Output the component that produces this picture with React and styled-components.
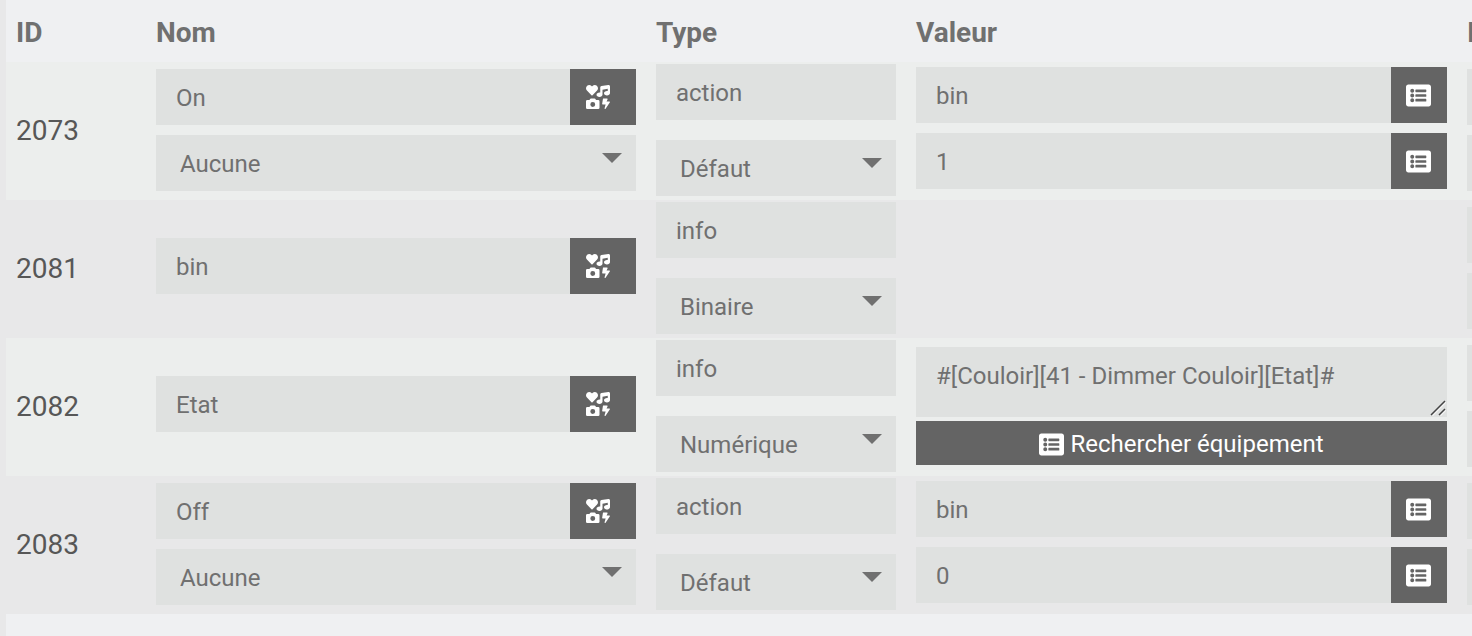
import React from 'react';
import styled, { createGlobalStyle } from 'styled-components';
import { FaIcons, FaListAlt } from 'react-icons/fa';

const GlobalStyle = createGlobalStyle`
  *, *::before, *::after { box-sizing: border-box; }
  body {
    margin: 0;
    background: #eff0f2;
    color: #707070;
    font-family: Roboto, "Liberation Sans", sans-serif;
  }
  button, input, select, textarea { font: inherit; margin: 0; }
`;

const Page = styled.main`
  min-height: 100vh;
  border-left: 6px solid #e8e8e9;
  overflow: hidden;
`;

const Table = styled.table`
  width: 100%;
  table-layout: fixed;
  border-collapse: collapse;
`;

const Col = styled.col`
  width: ${({ $width }) => $width};
`;

const HeadCell = styled.th`
  height: 62px;
  padding: 4px 10px 0;
  text-align: left;
  font-size: 28px;
  line-height: 36px;
  font-weight: 700;
  white-space: nowrap;
  overflow: hidden;
`;

const Row = styled.tr`
  background: #eceeed;
  &:nth-child(even) { background: #e8e8e9; }
`;

const Cell = styled.td`
  height: 138px;
  padding: 0 10px ${({ $bottom }) => $bottom || 0}px;
  vertical-align: middle;
  overflow: hidden;
`;

const IdCell = styled(Cell)`
  color: #575757;
  font-size: 28px;
  line-height: 36px;
`;

const ClippedHead = styled(HeadCell)`
  padding-right: 0;
`;

const ClippedCell = styled(Cell)`
  padding-right: 0;
`;

const Stack = styled.div`
  display: flex;
  flex-direction: column;
  gap: ${({ $gap }) => $gap}px;
`;

const Group = styled.div`
  display: flex;
`;

const Input = styled.input`
  flex: 1 0 auto;
  width: 0;
  height: 56px;
  padding: 2px 20px 0;
  border: 0;
  border-radius: 0;
  background: #dfe1e0;
  color: #707070;
  font-size: 24px;
`;

const Stub = styled.div`
  height: 56px;
  background: #dfe1e0;
`;

const SelectBox = styled.div`
  position: relative;
  display: flex;
  &::after {
    content: '';
    position: absolute;
    top: 18px;
    right: 14px;
    border: 10px solid transparent;
    border-top-color: #707070;
    border-bottom: 0;
    pointer-events: none;
  }
`;

const SelectControl = styled.select`
  appearance: none;
  width: 100%;
  height: 56px;
  padding: 2px 40px 0 24px;
  border: 0;
  border-radius: 0;
  background: #dfe1e0;
  color: #707070;
  font-size: 24px;
`;

const IconButton = styled.button`
  display: flex;
  align-items: center;
  justify-content: flex-start;
  width: ${({ $wide }) => ($wide ? 66 : 56)}px;
  height: 56px;
  padding: 0 ${({ $wide }) => ($wide ? 16 : 15)}px;
  border: 0;
  background: #646464;
  color: #fff;
  svg { flex: none; }
`;

const SearchButton = styled.button`
  display: flex;
  align-items: center;
  justify-content: center;
  gap: 6px;
  height: 44px;
  padding: 2px 0 0;
  border: 0;
  background: #646464;
  color: #fff;
  font-size: 24px;
`;

const AreaBox = styled.div`
  position: relative;
  display: flex;
`;

const Area = styled.textarea`
  width: 100%;
  height: 70px;
  padding: 12px 20px;
  border: 0;
  border-radius: 0;
  background: #dfe1e0;
  color: #707070;
  font-size: 24px;
  line-height: 34px;
  resize: none;
  overflow: hidden;
`;

const Grip = styled.svg`
  position: absolute;
  right: 1px;
  bottom: 1px;
  pointer-events: none;
`;

const rows = [
  { id: 2073, name: 'On', linked: 'Aucune', type: 'action', subtype: 'Défaut', values: ['bin', '1'] },
  { id: 2081, name: 'bin', type: 'info', subtype: 'Binaire' },
  { id: 2082, name: 'Etat', type: 'info', subtype: 'Numérique', formula: '#[Couloir][41 - Dimmer Couloir][Etat]#' },
  { id: 2083, name: 'Off', linked: 'Aucune', type: 'action', subtype: 'Défaut', values: ['bin', '0'] },
];

function Select({ value, label }) {
  return (
    <SelectBox>
      <SelectControl aria-label={label} defaultValue={value}>
        <option>{value}</option>
      </SelectControl>
    </SelectBox>
  );
}

function NameCell({ row }) {
  return (
    <Cell $bottom={row.linked ? 2 : 6}>
      <Stack $gap={10}>
        <Group>
          <Input aria-label="Nom" defaultValue={row.name} />
          <IconButton type="button" $wide aria-label="Icône"><FaIcons size={24} /></IconButton>
        </Group>
        {row.linked && <Select label="Nom" value={row.linked} />}
      </Stack>
    </Cell>
  );
}

function ValueCell({ row }) {
  if (row.values) {
    return (
      <Cell $bottom={6}>
        <Stack $gap={10}>
          {row.values.map((value) => (
            <Group key={value}>
              <Input aria-label="Valeur" defaultValue={value} />
              <IconButton type="button" aria-label="Rechercher équipement"><FaListAlt size={25} /></IconButton>
            </Group>
          ))}
        </Stack>
      </Cell>
    );
  }
  if (row.formula) {
    return (
      <Cell $bottom={2}>
        <Stack $gap={4}>
          <AreaBox>
            <Area aria-label="Valeur" defaultValue={row.formula} />
            <Grip width="16" height="16" viewBox="0 0 16 16" fill="none" strokeWidth="1.5">
              <path d="M2.5 15.5 16 2M10.5 15.5 16 10" stroke="#f4f4f4" />
              <path d="M1 15 15 1M9 15l6-6" stroke="#444" />
            </Grip>
          </AreaBox>
          <SearchButton type="button"><FaListAlt size={25} />Rechercher équipement</SearchButton>
        </Stack>
      </Cell>
    );
  }
  return <Cell />;
}

export default function App() {
  return (
    <Page>
      <GlobalStyle />
      <Table>
        <colgroup>
          <Col $width="140px" />
          <Col $width="500px" />
          <Col $width="260px" />
          <Col $width="auto" />
          <Col $width="15px" />
        </colgroup>
        <thead>
          <tr>
            <HeadCell>ID</HeadCell>
            <HeadCell>Nom</HeadCell>
            <HeadCell>Type</HeadCell>
            <HeadCell>Valeur</HeadCell>
            <ClippedHead>I</ClippedHead>
          </tr>
        </thead>
        <tbody>
          {rows.map((row) => (
            <Row key={row.id}>
              <IdCell>{row.id}</IdCell>
              <NameCell row={row} />
              <Cell $bottom={2}>
                <Stack $gap={20}>
                  <Group>
                    <Input aria-label="Type" defaultValue={row.type} />
                  </Group>
                  <Select label="Type" value={row.subtype} />
                </Stack>
              </Cell>
              <ValueCell row={row} />
              <ClippedCell $bottom={2}>
                <Stack $gap={10}>
                  <Stub />
                  <Stub />
                </Stack>
              </ClippedCell>
            </Row>
          ))}
        </tbody>
      </Table>
    </Page>
  );
}
